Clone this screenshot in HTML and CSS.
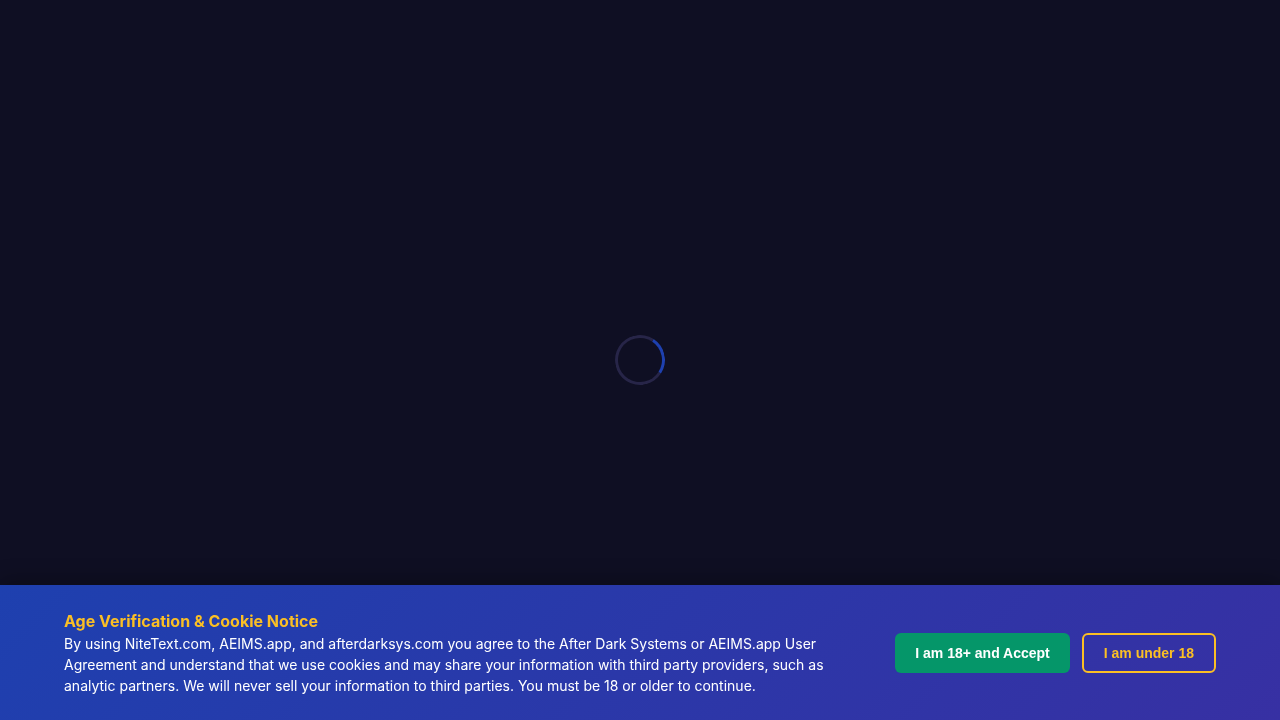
FILE: index.html
```html
<!DOCTYPE html>
<html lang="en">
<head>
<meta charset="utf-8">
<meta name="viewport" content="width=device-width, initial-scale=1">
<title>NiteText</title>
<link rel="stylesheet" href="styles.css">
</head>
<body>
<main class="loading" aria-label="Loading">
  <div class="spinner"></div>
</main>
<section class="notice" aria-labelledby="notice-title">
  <div class="notice-content">
    <div class="notice-text">
      <h2 class="notice-title" id="notice-title">Age Verification &amp; Cookie Notice</h2>
      <p class="notice-body">By using NiteText.com, AEIMS.app, and afterdarksys.com you agree to the After Dark Systems or AEIMS.app User Agreement and understand that we use cookies and may share your information with third party providers, such as analytic partners. We will never sell your information to third parties. You must be 18 or older to continue.</p>
    </div>
    <div class="notice-actions">
      <button class="btn btn-accept" type="button">I am 18+ and Accept</button>
      <button class="btn btn-decline" type="button">I am under 18</button>
    </div>
  </div>
</section>
</body>
</html>
```

FILE: styles.css
```css
* {
  box-sizing: border-box;
  margin: 0;
  padding: 0;
}

body {
  min-height: 100vh;
  background: #0f0f23;
  color: #fff;
  font-family: Inter, sans-serif;
}

.loading {
  display: flex;
  align-items: center;
  justify-content: center;
  min-height: 100vh;
}

.spinner {
  width: 50px;
  height: 50px;
  border: 3px solid #272548;
  border-top-color: #1e40af;
  border-radius: 50%;
  transform: rotate(78deg);
}

.notice {
  position: fixed;
  right: 0;
  bottom: 0;
  left: 0;
  padding: 24px 32px;
  background: linear-gradient(135deg, #1e40af, #3730a3);
  box-shadow: 0 -4px 20px rgba(0, 0, 0, 0.3);
}

.notice-content {
  display: flex;
  align-items: center;
  justify-content: space-between;
  gap: 32px;
  max-width: 1200px;
  margin: 0 auto;
  padding: 0 24px;
}

.notice-text {
  flex: 1;
  max-width: 800px;
}

.notice-title {
  color: #fbbf24;
  font-size: 16px;
  font-weight: 700;
  line-height: 24px;
}

.notice-body {
  font-size: 14px;
  line-height: 21px;
}

.notice-actions {
  display: flex;
  flex-shrink: 0;
  gap: 12px;
}

.btn {
  height: 40px;
  padding: 0 20px;
  border: 0;
  border-radius: 6px;
  font-family: "Liberation Sans", Arial, sans-serif;
  font-size: 14px;
  font-weight: 700;
  cursor: pointer;
}

.btn-accept {
  background: #059669;
  color: #fff;
}

.btn-decline {
  border: 2px solid #fbbf24;
  background: transparent;
  color: #fbbf24;
}
```
